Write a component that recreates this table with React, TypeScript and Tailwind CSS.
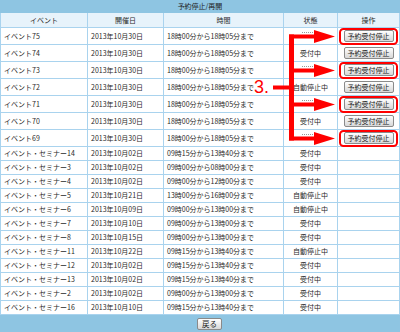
import React from 'react';

const cols = 'grid grid-cols-[87px_76px_120px_54px_62px]';
const cell = 'border-r border-b border-[#a9d3ee] flex items-center px-[3px] overflow-hidden whitespace-nowrap';

type Row = { name: string; date: string; time: string; status: string; button?: boolean };

const rows: Row[] = [
  { name: 'イベント75', date: '2013年10月30日', time: '18時00分から18時05分まで', status: '', button: true },
  { name: 'イベント74', date: '2013年10月30日', time: '18時00分から18時05分まで', status: '受付中', button: true },
  { name: 'イベント73', date: '2013年10月30日', time: '18時00分から18時05分まで', status: '', button: true },
  { name: 'イベント72', date: '2013年10月30日', time: '18時00分から18時05分まで', status: '自動停止中', button: true },
  { name: 'イベント71', date: '2013年10月30日', time: '18時00分から18時05分まで', status: '', button: true },
  { name: 'イベント70', date: '2013年10月30日', time: '18時00分から18時05分まで', status: '受付中', button: true },
  { name: 'イベント69', date: '2013年10月30日', time: '18時00分から18時05分まで', status: '', button: true },
  { name: 'イベント・セミナー14', date: '2013年10月02日', time: '09時15分から13時40分まで', status: '受付中' },
  { name: 'イベント・セミナー3', date: '2013年10月02日', time: '09時00分から08時00分まで', status: '受付中' },
  { name: 'イベント・セミナー4', date: '2013年10月02日', time: '09時00分から12時00分まで', status: '受付中' },
  { name: 'イベント・セミナー5', date: '2013年10月21日', time: '13時00分から16時00分まで', status: '自動停止中' },
  { name: 'イベント・セミナー6', date: '2013年10月09日', time: '09時00分から13時00分まで', status: '自動停止中' },
  { name: 'イベント・セミナー7', date: '2013年10月10日', time: '09時00分から13時00分まで', status: '受付中' },
  { name: 'イベント・セミナー8', date: '2013年10月15日', time: '09時00分から13時00分まで', status: '受付中' },
  { name: 'イベント・セミナー11', date: '2013年10月22日', time: '09時15分から13時40分まで', status: '自動停止中' },
  { name: 'イベント・セミナー12', date: '2013年10月02日', time: '09時15分から13時40分まで', status: '受付中' },
  { name: 'イベント・セミナー13', date: '2013年10月02日', time: '09時15分から13時40分まで', status: '受付中' },
  { name: 'イベント・セミナー2', date: '2013年10月02日', time: '09時00分から13時00分まで', status: '受付中' },
  { name: 'イベント・セミナー16', date: '2013年10月10日', time: '09時15分から13時40分まで', status: '受付中' },
];

// tops of the rows 75, 73, 71, 69 that the red arrows point at
const marked = [28, 62, 96, 130];

function Overlay() {
  return (
    <svg className="absolute left-0 top-0 pointer-events-none" width="400" height="332">
      <rect x="289" y="34.5" width="5" height="106" fill="#f00" />
      <rect x="273" y="85.5" width="18" height="4" fill="#f00" />
      {marked.map((top) => {
        const c = top + 8.5;
        return (
          <g key={top}>
            <line x1="302" y1={c - 4} x2="315" y2={c - 4} stroke="#999" strokeWidth="1" strokeDasharray="1 1" />
            <rect x="289" y={c - 2} width="27" height="4" fill="#f00" />
            <polygon points={`314,${c - 6.5} 335,${c} 314,${c + 6.5}`} fill="#f00" />
            <rect x="340" y={top + 1} width="57" height="15" rx="3.5" fill="none" stroke="#f00" strokeWidth="2" />
          </g>
        );
      })}
    </svg>
  );
}

export default function App() {
  return (
    <div className="relative w-[400px] h-[332px] overflow-hidden bg-white text-[7px] leading-none text-[#2a2a2a]" style={{ fontFamily: '"Noto Sans CJK JP", "Noto Sans", sans-serif' }}>
      {/* Title bar */}
      <div className="h-[13px] bg-[#8ec5e2] flex items-center justify-center text-[#222]">予約停止/再開</div>

      <div className="border-l border-[#a9d3ee]">
        {/* Header */}
        <div className={`${cols} h-[15px] bg-[#e7f3fb]`}>
          <div className={`${cell} justify-center`}>イベント</div>
          <div className={`${cell} justify-center`}>開催日</div>
          <div className={`${cell} justify-center`}>時間</div>
          <div className={`${cell} justify-center`}>状態</div>
          <div className={`${cell} justify-center`}>操作</div>
        </div>

        {rows.map((r) => (
          <div key={r.name} className={`${cols} ${r.button ? 'h-[17px]' : 'h-[14px]'}`}>
            <div className={cell}>{r.name}</div>
            <div className={cell}>{r.date}</div>
            <div className={cell}>{r.time}</div>
            <div className={`${cell} justify-center`}>{r.status}</div>
            <div className={`${cell} justify-center`}>
              {r.button && (
                <button className="w-[50px] h-[12px] flex items-center justify-center rounded-[2px] border border-[#8a8a8a] bg-gradient-to-b from-white to-[#d8d8d8] text-[7px] text-[#222]">
                  予約受付停止
                </button>
              )}
            </div>
          </div>
        ))}
      </div>

      {/* Footer */}
      <div className="h-[17px] bg-[#8ec5e2] flex items-center pl-[197px]">
        <button className="w-[25px] h-[12px] flex items-center justify-center rounded-[2px] border border-[#8a8a8a] bg-gradient-to-b from-white to-[#d8d8d8] text-[7.5px] text-[#222]">
          戻る
        </button>
      </div>

      <Overlay />
      <div className="absolute left-[254px] top-[78px] text-[18px] leading-none text-[#f00]" style={{ fontFamily: '"Liberation Sans", sans-serif' }}>
        3.
      </div>
    </div>
  );
}
